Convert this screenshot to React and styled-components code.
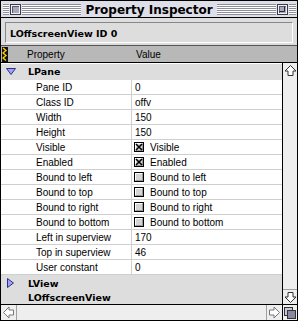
import React from 'react'
import styled, { createGlobalStyle } from 'styled-components'

const GlobalStyle = createGlobalStyle`
  html, body {
    margin: 0;
    padding: 0;
    background: #fff;
  }
  body {
    font-family: 'Liberation Sans', Arial, sans-serif;
    font-size: 10px;
    color: #000;
  }
`

const Window = styled.div`
  width: 298px;
  height: 321px;
  box-sizing: border-box;
  border: 1px solid #000;
  display: flex;
  flex-direction: column;
  background: #ddd;
  overflow: hidden;
`

const TitleBar = styled.div`
  flex: none;
  height: 16px;
  border-bottom: 1px solid #000;
  background: #dedee8;
  display: flex;
  align-items: flex-start;
  padding: 0 1px;
`

const Stripes = styled.div`
  margin-top: 3px;
  height: 11px;
  width: ${({ w }) => (w ? `${w}px` : 'auto')};
  flex: ${({ w }) => (w ? 'none' : '1')};
  margin-left: ${({ ml }) => ml || 0}px;
  margin-right: ${({ mr }) => mr || 0}px;
  background: repeating-linear-gradient(
    to bottom,
    #8e8e9a 0 1px,
    #ffffff 1px 2px
  );
`

const TitleBox = styled.svg`
  flex: none;
  margin-top: 3px;
  width: 11px;
  height: 11px;
  display: block;
`

const Title = styled.div`
  flex: none;
  height: 16px;
  line-height: 18px;
  padding: 0 3px;
  font-family: 'DejaVu Sans', sans-serif;
  font-weight: bold;
  font-size: 12px;
  white-space: nowrap;
`

const HeaderArea = styled.div`
  flex: none;
  height: 23px;
  padding: 4px 4px 0 4px;
  border-bottom: 1px solid #555;
`

const Inset = styled.div`
  box-sizing: border-box;
  height: 21px;
  border-top: 1px solid #888;
  border-left: 1px solid #888;
  border-bottom: 1px solid #fff;
  border-right: 1px solid #fff;
  padding: 2px 0 0 4px;
  line-height: 17px;
  font-family: 'DejaVu Sans', sans-serif;
  font-weight: bold;
  font-size: 9.5px;
  white-space: nowrap;
`

const ColumnHeader = styled.div`
  flex: none;
  box-sizing: border-box;
  height: 17px;
  border-bottom: 1px solid #000;
  background: #b8b8b8;
  display: grid;
  grid-template-columns: 132px 1fr;
`

const HeadCell = styled.div`
  display: flex;
  align-items: flex-start;
  padding-left: ${({ pl }) => pl}px;
  padding-top: 1px;
  line-height: 15px;
`

const SortIcon = styled.svg`
  display: block;
  width: 6px;
  height: 15px;
  margin: 0 19px 0 1px;
`

const Body = styled.div`
  flex: 1;
  display: flex;
  min-height: 0;
`

const List = styled.div`
  flex: 1;
  background: #fff;
  padding-top: 1px;
  display: flex;
  flex-direction: column;
`

const GroupRow = styled.div`
  height: ${({ h }) => h}px;
  background: #ddd;
  display: flex;
  align-items: flex-start;
  font-family: 'DejaVu Sans', sans-serif;
  font-weight: bold;
  font-size: 9.5px;
  line-height: ${({ lh }) => lh}px;
`

const TriangleSlot = styled.div`
  width: 27px;
  flex: none;
  padding-left: ${({ pl }) => pl}px;
  padding-top: ${({ pt }) => pt}px;
  box-sizing: border-box;
`

const Row = styled.div`
  height: 14px;
  border-bottom: 1px solid #cfcfcf;
  display: grid;
  grid-template-columns: 131px 1fr;
  line-height: 16px;
  white-space: nowrap;
`

const NameCell = styled.div`
  padding-left: 35px;
  border-right: 1px solid #cfcfcf;
  overflow: hidden;
`

const ValueCell = styled.div`
  padding-left: ${({ check }) => (check ? 2 : 3)}px;
  display: flex;
  align-items: flex-start;
  overflow: hidden;
`

const CheckSvg = styled.svg`
  display: block;
  flex: none;
  width: 10px;
  height: 10px;
  margin: 2px 6px 0 0;
`

const VScroll = styled.div`
  flex: none;
  width: 14px;
  border-left: 1px solid #000;
  background: #eee;
  display: flex;
  flex-direction: column;
`

const Track = styled.div`
  flex: 1;
`

const ArrowBox = styled.div`
  flex: none;
  width: ${({ w }) => w}px;
  height: ${({ h }) => h}px;
  display: flex;
  align-items: center;
  justify-content: center;
  border-top: ${({ bt }) => (bt ? '1px solid #a0a0a0' : 'none')};
  border-left: ${({ bl }) => (bl ? '1px solid #a0a0a0' : 'none')};
  border-right: ${({ br }) => (br ? '1px solid #a0a0a0' : 'none')};
`

const HScroll = styled.div`
  flex: none;
  height: 15px;
  border-top: 1px solid #000;
  background: #eee;
  display: flex;
`

const GrowBox = styled.div`
  flex: none;
  width: 14px;
  border-left: 1px solid #000;
  display: flex;
  align-items: center;
  justify-content: center;
`

const CloseBox = () => (
  <TitleBox viewBox="0 0 11 11">
    <rect x="0" y="0" width="11" height="11" fill="#3a3a44" />
    <rect x="1" y="1" width="9" height="9" fill="#f2f2f8" />
    <rect x="2" y="2" width="7" height="7" fill="#5a5a68" />
    <rect x="3" y="3" width="6" height="6" fill="#a8a8bc" />
  </TitleBox>
)

const ZoomBox = () => (
  <TitleBox viewBox="0 0 11 11">
    <rect x="0" y="0" width="11" height="11" fill="#3a3a44" />
    <rect x="1" y="1" width="9" height="9" fill="#f2f2f8" />
    <rect x="2" y="2" width="7" height="7" fill="#5a5a68" />
    <rect x="3" y="3" width="6" height="6" fill="#a8a8bc" />
    <path d="M2.5 7.5 H7.5 V2.5" fill="none" stroke="#2a2a38" strokeWidth="1" />
  </TitleBox>
)

const Triangle = ({ open }) =>
  open ? (
    <svg width="10" height="7" viewBox="0 0 10 7" style={{ display: 'block' }}>
      <polygon points="0.5,0.5 9.5,0.5 5,6.5" fill="#a0a0ff" stroke="#30307a" strokeWidth="1" />
    </svg>
  ) : (
    <svg width="7" height="10" viewBox="0 0 7 10" style={{ display: 'block' }}>
      <polygon points="0.5,0.5 6.5,5 0.5,9.5" fill="#a0a0ff" stroke="#30307a" strokeWidth="1" />
    </svg>
  )

const Checkbox = ({ checked }) => (
  <CheckSvg viewBox="0 0 10 10">
    <rect x="0.5" y="0.5" width="9" height="9" fill="#d4d4d4" stroke="#000" />
    <path d="M1.5 8.5 V1.5 H8.5" fill="none" stroke="#fff" />
    <path d="M8.5 1.5 V8.5 H1.5" fill="none" stroke="#999" />
    {checked && (
      <path d="M2 2 L8 8 M8 2 L2 8" stroke="#000" strokeWidth="1.6" />
    )}
  </CheckSvg>
)

const Arrow = ({ dir }) => {
  const rot = { up: 0, right: 90, down: 180, left: 270 }[dir]
  const color = dir === 'up' || dir === 'down' ? '#333' : '#777'
  return (
    <svg width="13" height="13" viewBox="0 0 13 13" style={{ display: 'block' }}>
      <g transform={`rotate(${rot} 6.5 6.5)`}>
        <polygon
          points="6.5,1.5 12,7 9,7 9,11.5 4,11.5 4,7 1,7"
          fill="#fff"
          stroke={color}
          strokeWidth="1"
        />
      </g>
    </svg>
  )
}

const props = [
  { name: 'Pane ID', value: '0' },
  { name: 'Class ID', value: 'offv' },
  { name: 'Width', value: '150' },
  { name: 'Height', value: '150' },
  { name: 'Visible', check: true, checked: true, value: 'Visible' },
  { name: 'Enabled', check: true, checked: true, value: 'Enabled' },
  { name: 'Bound to left', check: true, value: 'Bound to left' },
  { name: 'Bound to top', check: true, value: 'Bound to top' },
  { name: 'Bound to right', check: true, value: 'Bound to right' },
  { name: 'Bound to bottom', check: true, value: 'Bound to bottom' },
  { name: 'Left in superview', value: '170' },
  { name: 'Top in superview', value: '46' },
  { name: 'User constant', value: '0' },
]

export default function App() {
  return (
    <>
      <GlobalStyle />
      <Window>
        <TitleBar>
          <Stripes w={6} ml={1} mr={1} />
          <CloseBox />
          <Stripes ml={1} mr={1} />
          <Title>Property Inspector</Title>
          <Stripes ml={1} mr={1} />
          <ZoomBox />
          <Stripes w={7} ml={1} />
        </TitleBar>

        <HeaderArea>
          <Inset>LOffscreenView ID 0</Inset>
        </HeaderArea>

        <ColumnHeader>
          <HeadCell pl={0}>
            <SortIcon viewBox="0 0 6 15">
              <rect width="6" height="15" fill="#111" />
              <path
                d="M1 1 L4 3.5 L1 6 L4 8.5 L1 11 L4 13.5"
                fill="none"
                stroke="#ffd200"
                strokeWidth="1.4"
              />
            </SortIcon>
            Property
          </HeadCell>
          <HeadCell pl={3}>Value</HeadCell>
        </ColumnHeader>

        <Body>
          <List>
            <GroupRow h={16} lh={16}>
              <TriangleSlot pl={5} pt={4}>
                <Triangle open />
              </TriangleSlot>
              LPane
            </GroupRow>
            {props.map((p) => (
              <Row key={p.name}>
                <NameCell>{p.name}</NameCell>
                <ValueCell check={p.check}>
                  {p.check && <Checkbox checked={p.checked} />}
                  {p.value}
                </ValueCell>
              </Row>
            ))}
            <GroupRow h={15} lh={17}>
              <TriangleSlot pl={6} pt={3}>
                <Triangle />
              </TriangleSlot>
              LView
            </GroupRow>
            <GroupRow h={14} lh={16}>
              <TriangleSlot />
              LOffscreenView
            </GroupRow>
          </List>
          <VScroll>
            <ArrowBox w={14} h={15}>
              <Arrow dir="up" />
            </ArrowBox>
            <Track />
            <ArrowBox w={14} h={14} bt>
              <Arrow dir="down" />
            </ArrowBox>
          </VScroll>
        </Body>

        <HScroll>
          <ArrowBox w={15} h={15} br>
            <Arrow dir="left" />
          </ArrowBox>
          <Track />
          <ArrowBox w={15} h={15} bl>
            <Arrow dir="right" />
          </ArrowBox>
          <GrowBox>
            <svg width="12" height="12" viewBox="0 0 12 12" style={{ display: 'block' }}>
              <rect x="0.5" y="0.5" width="8" height="8" fill="#c8c8d8" stroke="#333" />
              <rect x="3.5" y="3.5" width="8" height="8" fill="#8888a0" stroke="#333" />
            </svg>
          </GrowBox>
        </HScroll>
      </Window>
    </>
  )
}
